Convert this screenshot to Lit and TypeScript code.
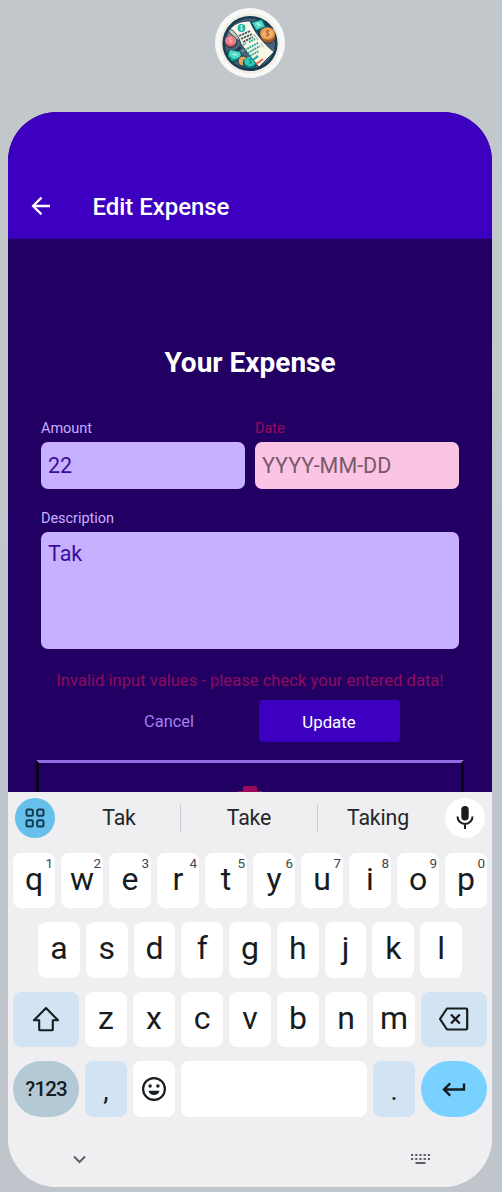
import { LitElement, html, css, svg } from "lit";
import { customElement, property } from "lit/decorators.js";

@customElement("receipt-logo")
class ReceiptLogo extends LitElement {
  static styles = css`
    :host { display: block; width: 70px; height: 70px; }
    svg { display: block; }
  `;
  render() {
    return html`<svg width="70" height="70" viewBox="0 0 70 70">
      <circle cx="35" cy="35" r="35" fill="#f8f8f6" />
      <circle cx="35" cy="35.5" r="30" fill="#efede3" />
      <circle cx="35" cy="35.5" r="27.6" fill="#173b50" />
      <circle cx="35" cy="35.5" r="25" fill="#496477" />
      <path d="M10 30l11 5M17 47l9-8M20 18l8 8M46 54l12-11M39 14l8 17M30 58l6-7M50 15l7 6" stroke="#193d52" stroke-width="3" />
      <path d="M13 26l6 3M50 45l9-3M24 45l5-3" stroke="#8295a1" stroke-width="1.6" />
      <path d="M36 14l11-3 4 8-10 4z" fill="#25b8a6" stroke="#123b4d" />
      <path d="M38 15l8-2 3 5-7 3z" fill="#55dbc5" />
      <path d="M42 15l3 3" stroke="#c5f8ed" stroke-width="1.5" />
      <ellipse cx="53" cy="29" rx="7.8" ry="6.3" fill="#9d5b2b" stroke="#173b50" />
      <ellipse cx="52.5" cy="25.5" rx="7.4" ry="6.2" fill="#e99c4c" />
      <ellipse cx="52.5" cy="25.5" rx="5.2" ry="4.3" fill="#f3b36a" />
      <path d="M54.5 23c-4-1.5-5 1.5-2 2.2s2 3.3-2 2M52.8 21.8v7" fill="none" stroke="#a86229" />
      <ellipse cx="15.5" cy="34" rx="6" ry="5.7" fill="#a44859" stroke="#173b50" />
      <ellipse cx="15.7" cy="32.5" rx="5.6" ry="5" fill="#ee7e86" />
      <path d="M17 30.5c-3-1-4 1-1.5 1.8s1.5 2.5-1.5 1.5" fill="none" stroke="#ffc4bf" />
      <path d="M14 42l12 2 1 7-10 3-5-6z" fill="#159b91" stroke="#123b4d" />
      <path d="M15 42l10 2 1 5-8 2-4-4z" fill="#4edbc3" />
      <path d="M18 46l4 1" stroke="#baf4e6" stroke-width="1.5" />
      <circle cx="28" cy="53" r="5" fill="#e2a65b" stroke="#173b50" />
      <ellipse cx="35" cy="55" rx="6.6" ry="5.6" fill="#07877f" stroke="#123b4d" />
      <ellipse cx="35" cy="53.5" rx="5.6" ry="4.7" fill="#31cdb7" />
      <path d="M37 51.5c-3-1-4 1-1.5 1.8s1.5 2.5-1.5 1.5" fill="none" stroke="#0e7f78" />
      <path d="M17 21c-4-1-4 3-1 5l8 7 1-6z" fill="#c9cbb9" stroke="#153b4d" stroke-width=".8" />
      <path d="M15 21c5-6 12-8 20-8 4 10 11 20 24 31l-15 15c-7-8-13-16-18-23-2-7-6-13-11-15z" fill="#f8f6e7" stroke="#173b50" stroke-width=".9" />
      <circle cx="26.5" cy="20" r="3.9" fill="#16b5a4" />
      <path d="M28 18c-3-1-4 1-1.5 1.8s1.5 2.5-1.5 1.5M26.5 16.8v6.2" fill="none" stroke="#caf8e9" stroke-width=".8" />
      <path d="M24 28l11-5M26 31l11-5M28 34l10-5" stroke="#4c6067" stroke-width="1.9" stroke-dasharray="2.5 .7" />
      <path d="M28 37l3-2M34 34l6-3M30 42l13-7M33 45l12-7M35 48l9-5" stroke="#27a999" stroke-width="2" stroke-dasharray="1.8 .8" />
      <path d="M39 27l4 5M46 35l2 4" stroke="#93a3a0" stroke-width="1.4" stroke-dasharray="1 .8" />
      <path d="M38 52l5-4" stroke="#24b19e" stroke-width="2.3" />
      <path d="M41 56l7-5" stroke="#ed665c" stroke-width="2" />
    </svg>`;
  }
}

@customElement("expense-screen")
class ExpenseScreen extends LitElement {
  static styles = css`
    :host { display: flex; flex-direction: column; height: 679.5px; overflow: hidden; background: #220063; font-family: Roboto, sans-serif; }
    .bar { flex: none; box-sizing: border-box; height: 126.5px; padding: 80px 0 0 21px; display: flex; align-items: flex-start; background: #3e00c0; border-bottom: 1px solid #3600a8; }
    .bar svg { flex: none; width: 24px; height: 24px; margin-top: 2px; }
    .heading { margin-left: 39.5px; font-size: 24px; line-height: 30px; font-weight: 500; letter-spacing: -0.05px; color: #fff; white-space: nowrap; }
    .form { display: flex; flex-direction: column; padding: 106.5px 33px 0; }
    .title { height: 36px; line-height: 36px; text-align: center; font-size: 28px; font-weight: 700; color: #fff; }
    .row { display: flex; gap: 10px; margin-top: 38px; }
    .field { flex: 1; display: flex; flex-direction: column; }
    .field.wide { margin-top: 20px; }
    .label { height: 23px; line-height: 20px; font-size: 14.5px; letter-spacing: -0.05px; color: #c8b0ff; }
    .label.bad { color: #9b095c; }
    .box { box-sizing: border-box; height: 46.5px; padding: 8px 7px; border-radius: 7px; background: #c7b0ff; color: #3c0d9b; font-size: 21.5px; line-height: 32px; }
    .box.bad { background: #fbc4e4; color: #795869; }
    .box.tall { height: 117px; padding-top: 6px; }
    .error { margin-top: 21px; height: 22px; line-height: 22px; font-size: 16.6px; text-align: center; white-space: nowrap; color: #8e0b5e; }
    .actions { display: flex; justify-content: center; gap: 19px; margin: 8px 1px 0 0; padding-right: 1px; }
    .action { width: 141px; height: 42px; line-height: 44px; text-align: center; font-size: 16.4px; border-radius: 4px; color: #a281f0; }
    .action.main { background: #3e00c0; color: #fff; font-size: 16.8px; }
    .drop { box-sizing: border-box; width: 427.5px; height: 60px; margin: 18.3px 0 0 -5px; padding-top: 23px; border: 3px solid #080014; border-top-color: #8f6ce2; display: flex; justify-content: center; align-items: flex-start; }
  `;
  render() {
    return html`
      <div class="bar">
        <svg viewBox="0 0 24 24" fill="none" stroke="#fff" stroke-width="2.3"><path d="M21 12H4M12.5 3.6L4.1 12l8.4 8.4" /></svg>
        <div class="heading">Edit Expense</div>
      </div>
      <div class="form">
        <div class="title">Your Expense</div>
        <div class="row">
          <div class="field"><div class="label">Amount</div><div class="box">22</div></div>
          <div class="field"><div class="label bad">Date</div><div class="box bad">YYYY-MM-DD</div></div>
        </div>
        <div class="field wide"><div class="label">Description</div><div class="box tall">Tak</div></div>
        <div class="error">Invalid input values - please check your entered data!</div>
        <div class="actions"><div class="action">Cancel</div><div class="action main">Update</div></div>
        <div class="drop"><svg width="32" height="36" viewBox="0 0 32 36" fill="#9c0a5c"><path d="M11 0h10q2 0 2 2v3h5v5H4V5h5V2q0-2 2-2z" /><path d="M5 13h22l-2 22H7z" /></svg></div>
      </div>`;
  }
}

const icons: Record<string, unknown> = {
  shift: svg`<path d="M13 1L1 13.3H6.2V22.5q0 .8.8.8h12q.8 0 .8-.8v-9.2H25z" stroke-width="2.1" stroke-linejoin="round" />`,
  del: svg`<path d="M8 .5h19q1.2 0 1.2 1.2v18.6q0 1.2-1.2 1.2H8L1 11z" stroke-width="2.2" stroke-linejoin="round" /><path d="M12 6.5l8.8 9M20.8 6.5l-8.8 9" stroke-width="2.3" />`,
  emoji: svg`<circle cx="13" cy="13" r="10.9" stroke-width="2.2" /><circle cx="9.1" cy="10" r="1.7" fill="#171c20" stroke="none" /><circle cx="16.9" cy="10" r="1.7" fill="#171c20" stroke="none" /><path d="M7.5 14.8h11c-1 5.7-10 5.7-11 0z" fill="#171c20" stroke="none" />`,
  enter: svg`<path d="M22 6.5v6H2.5M8.2 6.3L2 12.5l6.2 6.2" stroke-width="2.4" />`,
};

@customElement("key-cap")
class KeyCap extends LitElement {
  @property() label = "";
  @property() hint = "";
  @property() icon = "";
  @property() tone = "";
  static styles = css`
    :host { display: block; min-width: 0; min-height: 0; }
    .key { height: 100%; display: grid; grid-template-rows: minmax(0, 1fr); border-radius: 8px; background: #fff; color: #171c20; font-family: Roboto, sans-serif; }
    .key > * { grid-area: 1 / 1; }
    .key.soft { background: #d2e4f4; }
    .key.mode { background: #b4c9d6; border-radius: 28px; }
    .key.go { background: #78d1ff; border-radius: 28px; }
    .label { justify-self: center; font-size: 32px; line-height: 52px; white-space: pre; }
    .mode .label { font-size: 20.5px; font-weight: 500; line-height: 56px; letter-spacing: -0.9px; }
    .label.mark { line-height: 61px; font-size: 27px; }
    .hint { justify-self: end; margin: 2px 2px 0 0; font-size: 13.5px; line-height: 16px; color: #42474b; }
    svg { place-self: center; fill: none; stroke: #171c20; overflow: visible; }
  `;
  render() {
    const sizes: Record<string, number[]> = { shift: [26, 24], del: [31, 22], emoji: [26, 26], enter: [24, 24] };
    const s = sizes[this.icon];
    const mark = this.label === "," || this.label === ".";
    return html`<div class="key ${this.tone}">
      ${s
        ? html`<svg width=${s[0]} height=${s[1]} viewBox="0 0 ${s[0]} ${s[1]}">${icons[this.icon]}</svg>`
        : html`<span class="label ${mark ? "mark" : ""}">${this.label}</span>`}
      ${this.hint ? html`<span class="hint">${this.hint}</span>` : ""}
    </div>`;
  }
}

@customElement("soft-keyboard")
class SoftKeyboard extends LitElement {
  static styles = css`
    :host { display: flex; flex-direction: column; flex: 1; background: #efeff1; font-family: Roboto, sans-serif; color: #22272b; }
    .suggest { display: grid; grid-template-columns: 40px 125px 1px 136px 1px 1fr 40px; height: 40px; padding: 5.5px 7px 0; align-items: center; }
    .round { width: 40px; height: 40px; border-radius: 50%; display: grid; place-items: center; background: #fff; }
    .round.blue { background: #66c0eb; }
    .word { text-align: center; font-size: 21.3px; line-height: 42px; letter-spacing: -0.15px; }
    .word.first { padding-left: 3px; }
    .word.last-word { padding-right: 7px; }
    .line { height: 28px; width: 1px; background: #c9cbce; }
    .rows { display: flex; flex-direction: column; gap: 14px; padding: 16px 5px 0; }
    .keys { display: grid; grid-template-rows: minmax(0, 1fr); gap: 6px; height: 55.3px; }
    .ten { grid-template-columns: repeat(10, 1fr); }
    .nine { grid-template-columns: repeat(9, 1fr); padding: 0 25px; }
    .third { grid-template-columns: 66px repeat(7, 1fr) 66px; }
    .last { grid-template-columns: 66px 42px 42px 1fr 42px 66px; height: 56px; }
    .nav { display: flex; justify-content: space-between; padding: 35px 62px 0 65px; }
  `;
  render() {
    const digits = "1234567890";
    return html`
      <div class="suggest">
        <div class="round blue"><svg width="20" height="20" viewBox="0 0 20 20" fill="none" stroke="#123a4d" stroke-width="2"><rect x="1.5" y="1.5" width="6.3" height="6.3" rx="1.5" /><rect x="12.2" y="1.5" width="6.3" height="6.3" rx="1.5" /><rect x="1.5" y="12.2" width="6.3" height="6.3" rx="1.5" /><rect x="12.2" y="12.2" width="6.3" height="6.3" rx="1.5" /></svg></div>
        <div class="word first">Tak</div><div class="line"></div>
        <div class="word">Take</div><div class="line"></div>
        <div class="word last-word">Taking</div>
        <div class="round"><svg width="18" height="24" viewBox="0 0 18 24" fill="none" stroke="#171c20" stroke-width="2"><rect x="5.3" y="0" width="7.4" height="14.5" rx="3.7" fill="#171c20" stroke="none" /><path d="M1.5 10.5a7.5 7.5 0 0 0 15 0M9 18v5" /></svg></div>
      </div>
      <div class="rows">
        <div class="keys ten">${[..."qwertyuiop"].map((c, i) => html`<key-cap label=${c} hint=${digits[i]}></key-cap>`)}</div>
        <div class="keys nine">${[..."asdfghjkl"].map((c) => html`<key-cap label=${c}></key-cap>`)}</div>
        <div class="keys third">
          <key-cap icon="shift" tone="soft"></key-cap>
          ${[..."zxcvbnm"].map((c) => html`<key-cap label=${c}></key-cap>`)}
          <key-cap icon="del" tone="soft"></key-cap>
        </div>
        <div class="keys last">
          <key-cap label="?123" tone="mode"></key-cap>
          <key-cap label="," tone="soft"></key-cap>
          <key-cap icon="emoji"></key-cap>
          <key-cap></key-cap>
          <key-cap label="." tone="soft"></key-cap>
          <key-cap icon="enter" tone="go"></key-cap>
        </div>
      </div>
      <div class="nav">
        <svg width="13" height="14" viewBox="0 0 13 14" fill="none" stroke="#5d6064" stroke-width="2"><path d="M1 4.5L6.5 10 12 4.5" /></svg>
        <svg width="19" height="14" viewBox="0 0 19 14" fill="none" stroke="#5d6064" stroke-width="2"><path d="M0 3h19M0 7h19" stroke-dasharray="2.2 2" /><path d="M4.5 11h10" /></svg>
      </div>`;
  }
}

@customElement("app-root")
class AppRoot extends LitElement {
  static styles = css`
    :host { display: block; box-sizing: border-box; width: 502px; height: 1192px; overflow: hidden; padding: 8px 10px 0 8px; background: linear-gradient(180deg, #c2c7cc, #c3c8cb 32%, #bfc4cd 60%, #c0c5cb); }
    .logo { display: flex; justify-content: center; height: 104px; }
    .phone { display: flex; flex-direction: column; width: 484px; height: 1075px; border-radius: 49px; overflow: hidden; background: #efeff1; }
  `;
  render() {
    return html`<div class="logo"><receipt-logo></receipt-logo></div>
      <div class="phone"><expense-screen></expense-screen><soft-keyboard></soft-keyboard></div>`;
  }
}
